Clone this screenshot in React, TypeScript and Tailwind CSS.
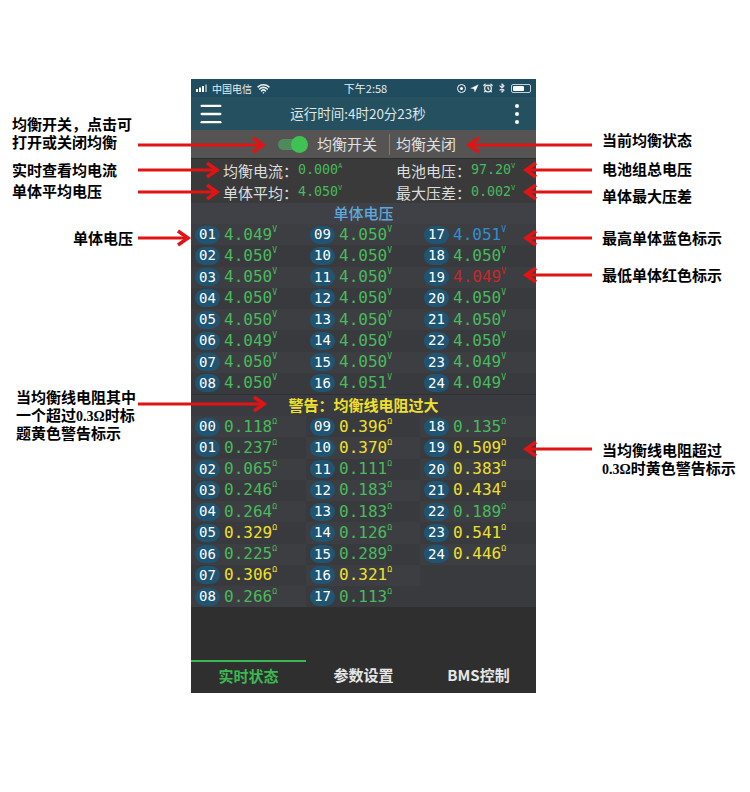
import React from "react";
import { AlarmClock, Bluetooth, Menu, Navigation, Wifi } from "lucide-react";

const CJK = "font-['Noto_Sans_CJK_SC',sans-serif]";
const MONO = "font-['DejaVu_Sans_Mono','Noto_Sans_CJK_SC',monospace]";

type Tone = "green" | "blue" | "red" | "yellow";

const toneClass: Record<Tone, string> = {
    green: "text-[#48bb5c]",
    blue: "text-[#2f8fd0]",
    red: "text-[#c9262b]",
    yellow: "text-[#efe02e]",
};

const voltages: [string, string, Tone?][] = [
    ["01", "4.049"], ["02", "4.050"], ["03", "4.050"], ["04", "4.050"],
    ["05", "4.050"], ["06", "4.049"], ["07", "4.050"], ["08", "4.050"],
    ["09", "4.050"], ["10", "4.050"], ["11", "4.050"], ["12", "4.050"],
    ["13", "4.050"], ["14", "4.050"], ["15", "4.050"], ["16", "4.051"],
    ["17", "4.051", "blue"], ["18", "4.050"], ["19", "4.049", "red"], ["20", "4.050"],
    ["21", "4.050"], ["22", "4.050"], ["23", "4.049"], ["24", "4.049"],
];

const resistances: [string, string, Tone?][] = [
    ["00", "0.118"], ["01", "0.237"], ["02", "0.065"], ["03", "0.246"], ["04", "0.264"],
    ["05", "0.329", "yellow"], ["06", "0.225"], ["07", "0.306", "yellow"], ["08", "0.266"],
    ["09", "0.396", "yellow"], ["10", "0.370", "yellow"], ["11", "0.111"], ["12", "0.183"],
    ["13", "0.183"], ["14", "0.126"], ["15", "0.289"], ["16", "0.321", "yellow"], ["17", "0.113"],
    ["18", "0.135"], ["19", "0.509", "yellow"], ["20", "0.383", "yellow"], ["21", "0.434", "yellow"],
    ["22", "0.189"], ["23", "0.541", "yellow"], ["24", "0.446", "yellow"],
];

function Cell({ id, value, unit, tone = "green" }: { id: string; value: string; unit: string; tone?: Tone }) {
    return (
        <div className="flex h-[21.25px] items-center pl-1 odd:bg-[#3d3e42]">
            <span className={`flex h-[18px] w-[25px] items-center justify-center rounded-full bg-[#1f5573] text-[14px] text-white ${MONO}`}>
                {id}
            </span>
            <span className={`ml-[4px] flex items-start text-[16px] leading-none ${toneClass[tone]} ${MONO}`}>
                {value}
                <span className="mt-[-1px] text-[8px] leading-[8px]">{unit}</span>
            </span>
        </div>
    );
}

function CellGrid({ items, unit, rows }: { items: [string, string, Tone?][]; unit: string; rows: string }) {
    return (
        <div className={`grid grid-flow-col grid-cols-[115px_114px_116px] bg-[#393a3e] ${rows}`}>
            {items.map(([id, value, tone]) => (
                <Cell key={unit + id} id={id} value={value} unit={unit} tone={tone} />
            ))}
        </div>
    );
}

function Stat({ label, value, unit }: { label: string; value: string; unit: string }) {
    return (
        <div className="flex items-center">
            <span className="w-[75px] text-[15px] leading-none text-[#dcdcdc]">{label}</span>
            <span className={`flex items-start text-[13.3px] leading-none text-[#48bb5c] ${MONO}`}>
                {value}
                <span className="text-[7px] leading-[7px]">{unit}</span>
            </span>
        </div>
    );
}

function StatusBar() {
    return (
        <div className="flex h-[18px] items-center justify-between bg-[#1f4c5e] px-[5px] text-[10px] text-[#e8eef0]">
            <div className="flex w-[110px] items-center">
                <svg width="14" height="8" viewBox="0 0 14 8" className="mr-[2px]">
                    <rect x="0" y="5" width="2" height="3" fill="#fff" />
                    <rect x="3" y="3.5" width="2" height="4.5" fill="#fff" />
                    <rect x="6" y="2" width="2" height="6" fill="#fff" />
                    <rect x="9" y="0.5" width="2" height="7.5" fill="#8fa5ad" />
                </svg>
                <span>中国电信</span>
                <Wifi size={13} strokeWidth={3} className="ml-[5px]" />
            </div>
            <span className="ml-[4px] text-[11px]">下午2:58</span>
            <div className="flex w-[110px] items-center justify-end gap-[4px]">
                <span className="flex h-[9px] w-[9px] items-center justify-center rounded-full border border-white">
                    <span className="h-[3px] w-[3px] rounded-full bg-white" />
                </span>
                <Navigation size={9} fill="#fff" strokeWidth={1} />
                <AlarmClock size={10} strokeWidth={3} />
                <Bluetooth size={10} strokeWidth={2.5} />
                <span className="flex h-[9px] w-[20px] items-center rounded-[2px] border border-[#c7d2d6] p-[1px]">
                    <span className="h-full w-[11px] rounded-[1px] bg-white" />
                </span>
            </div>
        </div>
    );
}

function Phone() {
    return (
        <div className={`flex h-[614px] w-[345px] flex-col bg-[#2f2f2f] ${CJK}`}>
            <StatusBar />

            {/* Header */}
            <div className="grid h-[33px] grid-cols-[1fr_auto_1fr] items-center bg-[#24505f] pl-[6px] pr-[17px]">
                <Menu size={28} className="text-white" />
                <span className="text-[13.5px] text-[#dfe6e8]">运行时间:4时20分23秒</span>
                <div className="flex flex-col items-end gap-[4px]">
                    <span className="h-1 w-1 rounded-full bg-white" />
                    <span className="h-1 w-1 rounded-full bg-white" />
                    <span className="h-1 w-1 rounded-full bg-white" />
                </div>
            </div>

            {/* Balance switch */}
            <div className="flex h-[28px] items-center bg-[#555453] pl-[87px] text-[15px] text-[#e0e0e0]">
                <div className="relative h-[11px] w-[28px] rounded-full bg-[#4f8a5b]">
                    <span className="absolute right-[-2px] top-[-3px] h-[17px] w-[17px] rounded-full bg-[#3fc253]" />
                </div>
                <span className="ml-[11px]">均衡开关</span>
                <span className="ml-[12px] h-[21px] w-[1px] bg-[#4f9a5d]" />
                <span className="ml-[6px]">均衡关闭</span>
            </div>

            {/* Stats */}
            <div className="grid h-[45px] grid-cols-[173px_140px] grid-rows-2 items-center border-t border-[#2c2c2c] bg-[#3a3a3a] pl-[32px]">
                <Stat label="均衡电流：" value="0.000" unit="A" />
                <Stat label="电池电压：" value="97.20" unit="V" />
                <Stat label="单体平均：" value="4.050" unit="V" />
                <Stat label="最大压差：" value="0.002" unit="V" />
            </div>

            <div className="flex h-[21px] items-center justify-center bg-[#404147] text-[15px] font-medium text-[#5fa8de]">
                单体电压
            </div>
            <CellGrid items={voltages} unit="V" rows="grid-rows-8" />

            <div className="flex h-[22px] items-center justify-center border-t border-[#2f3033] bg-[#3a3b40] text-[15px] font-bold text-[#efe02e]">
                警告：均衡线电阻过大
            </div>
            <CellGrid items={resistances} unit="Ω" rows="grid-rows-9" />

            {/* Tabs */}
            <div className="mt-auto grid h-[33px] grid-cols-3 text-[15px] font-bold text-[#e6e6e6]">
                <div className="flex items-center justify-center border-t-2 border-[#3cb850] pb-[3px] text-[#3cb850]">实时状态</div>
                <div className="flex items-center justify-center pb-[3px]">参数设置</div>
                <div className="flex items-center justify-center pb-[3px]">BMS控制</div>
            </div>
        </div>
    );
}

// Red callout arrow, from x1 to the tip at x2
function Arrow({ x1, x2, y }: { x1: number; x2: number; y: number }) {
    const dir = x2 > x1 ? -1 : 1;
    return (
        <g stroke="#e01414" fill="none">
            <line x1={x1} y1={y} x2={x2 + dir * 3} y2={y} strokeWidth="3" />
            <polyline
                points={`${x2 + dir * 12},${y - 7} ${x2 + dir * 2},${y} ${x2 + dir * 12},${y + 7}`}
                strokeWidth="3.5"
            />
        </g>
    );
}

function Note({ className, lines }: { className: string; lines: React.ReactNode[] }) {
    return (
        <div className={`absolute text-[15px] font-bold text-black ${CJK} ${className}`}>
            {lines.map((line, i) => (
                <div key={i} className="h-[18px] whitespace-nowrap leading-[18px]">
                    {line}
                </div>
            ))}
        </div>
    );
}

const Ohm = () => <span className="font-['Liberation_Serif',serif] text-[14px]">0.3Ω</span>;

export default function App() {
    return (
        <div className="relative h-[792px] w-[750px] overflow-hidden bg-white pl-[191px] pt-[79px]">
            <Phone />

            {/* Annotations over the screenshot */}
            <svg className="absolute left-0 top-0" width="750" height="792">
                <Arrow x1={138} x2={265} y={145} />
                <Arrow x1={138} x2={219} y={170} />
                <Arrow x1={138} x2={219} y={192} />
                <Arrow x1={138} x2={190} y={238} />
                <Arrow x1={138} x2={266} y={404} />
                <Arrow x1={592} x2={467} y={145} />
                <Arrow x1={592} x2={524} y={170} />
                <Arrow x1={592} x2={524} y={192} />
                <Arrow x1={592} x2={524} y={238} />
                <Arrow x1={592} x2={524} y={275} />
                <Arrow x1={592} x2={524} y={449} />
            </svg>

            <Note className="left-[12px] top-[115px]" lines={["均衡开关，点击可", "打开或关闭均衡"]} />
            <Note className="left-[12px] top-[161px]" lines={["实时查看均电流"]} />
            <Note className="left-[12px] top-[182px]" lines={["单体平均电压"]} />
            <Note className="left-[73px] top-[229px]" lines={["单体电压"]} />
            <Note
                className="left-[16px] top-[388px]"
                lines={[
                    "当均衡线电阻其中",
                    <>一个超过<Ohm />时标</>,
                    "题黄色警告标示",
                ]}
            />

            <Note className="left-[602px] top-[131px]" lines={["当前均衡状态"]} />
            <Note className="left-[602px] top-[160px]" lines={["电池组总电压"]} />
            <Note className="left-[602px] top-[187px]" lines={["单体最大压差"]} />
            <Note className="left-[602px] top-[229px]" lines={["最高单体蓝色标示"]} />
            <Note className="left-[602px] top-[266px]" lines={["最低单体红色标示"]} />
            <Note
                className="left-[602px] top-[441px]"
                lines={["当均衡线电阻超过", <><Ohm />时黄色警告标示</>]}
            />
        </div>
    );
}
